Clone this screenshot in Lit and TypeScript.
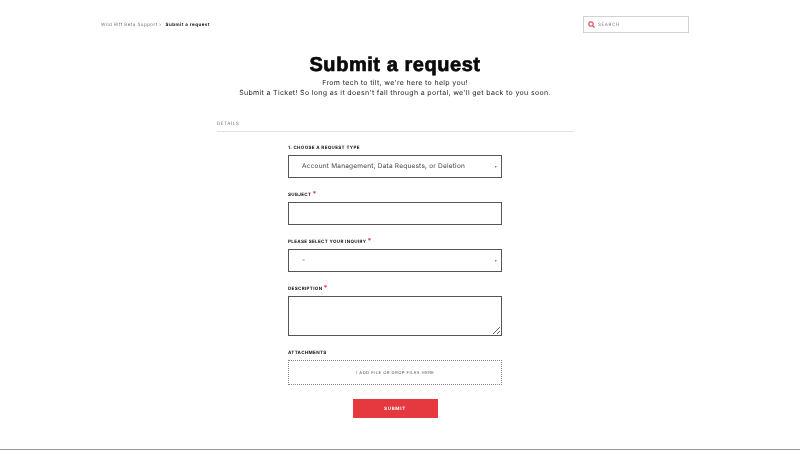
import { LitElement, html, css } from "lit";
import { customElement } from "lit/decorators.js";

@customElement("app-root")
export class AppRoot extends LitElement {
  static styles = css`
    :host { display: block; width: 800px; height: 450px; background: #fff; font-family: "Inter", "Liberation Sans", sans-serif; color: #111; overflow: hidden; text-rendering: geometricPrecision; }
    .page { display: flex; flex-direction: column; height: 450px; box-sizing: border-box; border-bottom: 1px solid #999; filter: blur(0.35px); }
    .top { display: flex; justify-content: space-between; align-items: center; padding: 16px 111px 0 101px; height: 17px; }
    .crumbs { display: flex; gap: 4px; padding-top: 1px; font-size: 4.5px; letter-spacing: 0.45px; color: #777; }
    .crumbs b { color: #111; font-weight: 700; }
    .search { box-sizing: border-box; width: 106px; height: 17px; border: 1px solid #d2d2d2; display: flex; align-items: center; gap: 3px; padding-left: 4px; font-size: 4.5px; letter-spacing: 0.6px; color: #777; }
    .search span { padding-top: 1px; }
    .search svg { width: 7px; height: 7px; }
    .head { text-align: center; margin: 22px 0 0 -10px; }
    h1 { margin: 0; font: 700 20px/20px "Liberation Sans", sans-serif; letter-spacing: 0.55px; color: #0a0a0a; -webkit-text-stroke: 0.7px #0a0a0a; }
    .head p { margin: 0; font-size: 7px; line-height: 10px; letter-spacing: 0.34px; color: #222; }
    .head p.first { margin-top: 3px; }
    .details { margin: 23px 0 0 217px; width: 357px; box-sizing: border-box; border-bottom: 1px solid #e2e2e2; height: 11px; font-size: 4.5px; line-height: 8px; letter-spacing: 0.6px; color: #666; }
    form { display: flex; flex-direction: column; width: 214px; margin: 14px 0 0 288px; }
    .label { height: 7px; font-size: 4.5px; line-height: 6px; font-weight: 700; letter-spacing: 0.35px; color: #111; display: flex; gap: 1px; }
    .req { color: #e0323c; font-size: 7px; line-height: 6px; font-weight: 700; margin-top: -2px; }
    .box { box-sizing: border-box; width: 214px; height: 23px; border: 1px solid #555; margin-top: 2px; margin-bottom: 15px; display: flex; align-items: center; justify-content: space-between; padding: 0 4px 1px 13px; font-size: 6.5px; letter-spacing: 0.22px; color: #444; }
    .caret { font-size: 4px; color: #777; }
    textarea { display: block; box-sizing: border-box; width: 214px; height: 40px; border: 1px solid #555; margin: 2px 0 15px; padding: 0; background: #fff; outline: none; }
    .drop { box-sizing: border-box; width: 214px; height: 25px; border: 1px dotted #888; margin-top: 2px; padding-top: 1px; display: flex; align-items: center; justify-content: center; font-size: 4.2px; letter-spacing: 0.45px; color: #555; }
    .submit { align-self: center; margin-top: 14px; width: 85px; height: 19px; padding-top: 1px; box-sizing: border-box; background: #e5383f; color: #fff; display: flex; align-items: center; justify-content: center; font-size: 4.5px; font-weight: 700; letter-spacing: 0.7px; }
  `;

  render() {
    return html`<div class="page">
      <div class="top">
        <div class="crumbs"><span>Wild Rift Beta Support ›</span><b>Submit a request</b></div>
        <div class="search">
          <svg viewBox="0 0 14 14" fill="none" stroke="#d9505f" stroke-width="2.4"><circle cx="6" cy="6" r="4.4"></circle><path d="M9.4 9.4 13 13"></path></svg>
          <span>SEARCH</span>
        </div>
      </div>
      <div class="head">
        <h1>Submit a request</h1>
        <p class="first">From tech to tilt, we're here to help you!</p>
        <p>Submit a Ticket! So long as it doesn't fall through a portal, we'll get back to you soon.</p>
      </div>
      <div class="details">DETAILS</div>
      <form>
        <div class="label">1. CHOOSE A REQUEST TYPE</div>
        <div class="box"><span>Account Management, Data Requests, or Deletion</span><span class="caret">▾</span></div>
        <div class="label">SUBJECT<span class="req">*</span></div>
        <div class="box"></div>
        <div class="label">PLEASE SELECT YOUR INQUIRY<span class="req">*</span></div>
        <div class="box"><span>-</span><span class="caret">▾</span></div>
        <div class="label">DESCRIPTION<span class="req">*</span></div>
        <textarea></textarea>
        <div class="label">ATTACHMENTS</div>
        <div class="drop">/ ADD FILE OR DROP FILES HERE</div>
        <div class="submit">SUBMIT</div>
      </form>
    </div>`;
  }
}
